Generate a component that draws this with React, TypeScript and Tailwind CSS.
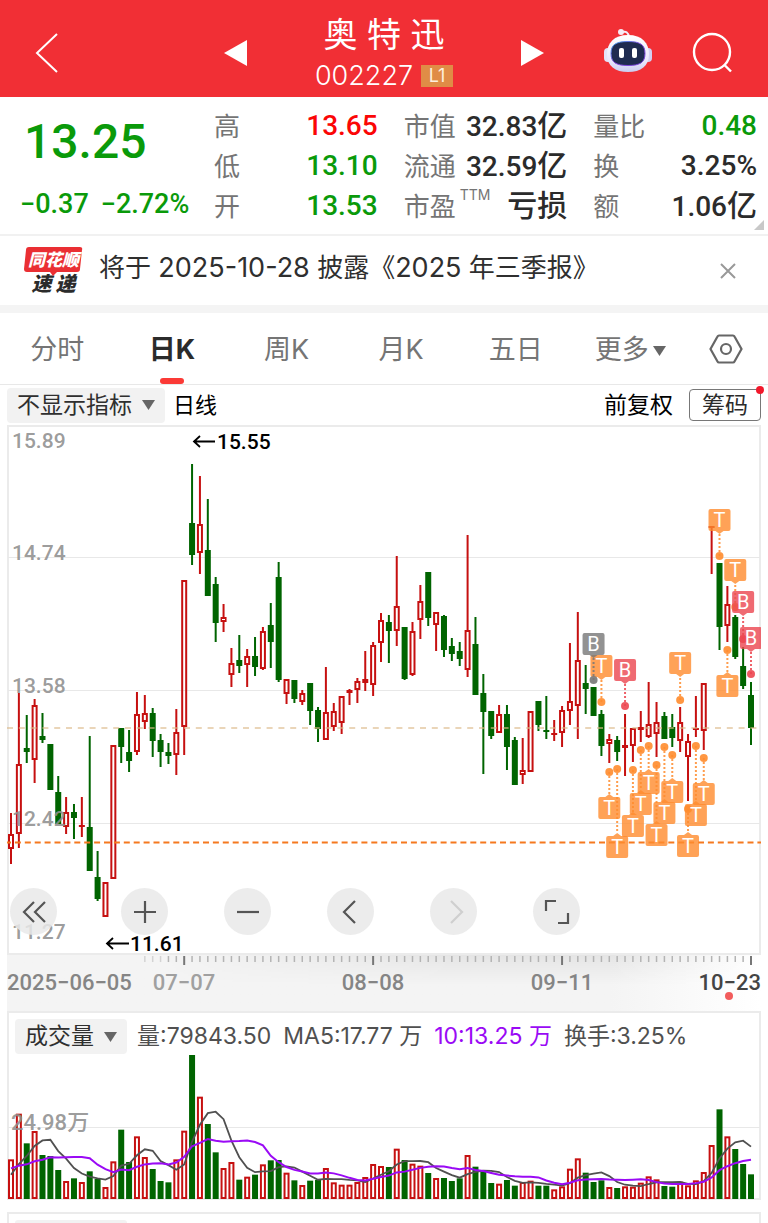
import type { ReactNode } from 'react';

type Candle = ['r' | 'g', number, number, number, number];

// color, high, body top, body bottom, low
const candles: Candle[] = [
  ['r', 813, 834, 849, 864], ['r', 693, 764, 834, 848], ['g', 715, 748, 752, 763], ['r', 699, 705, 760, 783],
  ['g', 713, 736, 740, 743], ['g', 744, 744, 790, 790], ['g', 776, 792, 824, 824], ['r', 797, 812, 827, 834],
  ['g', 804, 812, 818, 839], ['r', 797, 825, 827, 837], ['g', 736, 827, 871, 871], ['g', 851, 877, 899, 901],
  ['r', 882, 882, 917, 917], ['r', 745, 745, 879, 879], ['g', 728, 728, 747, 763], ['g', 730, 752, 761, 772],
  ['r', 692, 714, 752, 755], ['r', 695, 713, 722, 729], ['g', 708, 713, 741, 757], ['g', 734, 740, 752, 767],
  ['g', 743, 752, 756, 764], ['r', 709, 732, 755, 775], ['r', 580, 580, 727, 755], ['g', 464, 523, 555, 565],
  ['r', 476, 524, 553, 574], ['g', 499, 550, 596, 596], ['g', 577, 584, 623, 642], ['r', 604, 617, 622, 632],
  ['r', 648, 663, 675, 687], ['g', 635, 660, 666, 673], ['r', 649, 656, 665, 687], ['g', 637, 656, 667, 676],
  ['r', 627, 631, 669, 670], ['g', 603, 625, 642, 668], ['g', 562, 577, 680, 682], ['r', 679, 679, 694, 704],
  ['g', 680, 680, 699, 703], ['r', 690, 693, 702, 705], ['g', 683, 683, 711, 725], ['g', 707, 710, 729, 742],
  ['r', 667, 712, 740, 740], ['r', 703, 711, 727, 731], ['r', 696, 696, 723, 734], ['r', 689, 690, 693, 705],
  ['r', 678, 681, 690, 703], ['r', 651, 679, 683, 691], ['r', 642, 645, 685, 696], ['r', 613, 620, 643, 662],
  ['g', 615, 622, 631, 663], ['r', 556, 606, 631, 646], ['g', 627, 627, 679, 680], ['r', 622, 631, 675, 676],
  ['r', 585, 601, 620, 639], ['g', 572, 572, 618, 626], ['r', 612, 612, 625, 651], ['g', 615, 616, 650, 657],
  ['g', 638, 646, 654, 661], ['g', 642, 651, 659, 666], ['r', 535, 630, 670, 677], ['g', 617, 644, 695, 695],
  ['g', 674, 693, 712, 774], ['g', 711, 711, 736, 739], ['r', 705, 714, 733, 733], ['g', 705, 714, 747, 770],
  ['g', 737, 740, 785, 785], ['r', 738, 770, 775, 784], ['r', 711, 711, 772, 772], ['g', 701, 701, 725, 731],
  ['g', 696, 730, 731, 739], ['r', 720, 733, 735, 741], ['r', 706, 710, 733, 747], ['r', 643, 701, 711, 725],
  ['r', 612, 660, 706, 739], ['g', 665, 683, 689, 714], ['g', 687, 687, 716, 716], ['g', 710, 714, 746, 756],
  ['r', 734, 739, 744, 763], ['g', 736, 740, 752, 761], ['r', 714, 745, 748, 776], ['r', 728, 728, 746, 762],
  ['r', 711, 727, 730, 742], ['r', 682, 724, 737, 738], ['r', 702, 722, 734, 757], ['g', 712, 716, 739, 739],
  ['g', 714, 727, 738, 747], ['r', 707, 722, 741, 752], ['r', 734, 741, 757, 801], ['r', 696, 728, 730, 737],
  ['r', 683, 683, 731, 750], ['r', 526, 526, 528, 574], ['g', 563, 563, 627, 650], ['r', 586, 604, 626, 642],
  ['g', 615, 617, 657, 659], ['g', 647, 666, 686, 689], ['g', 682, 695, 728, 745],
];

// days before the first visible candle, only used by the averages
const earlierVolumes = [176, 127, 114, 82, 56, 96, 47, 54, 49];

const volumes = [
  119, 256, 167, 204, 132, 129, 87, 54, 62, 51, 83, 60, 36, 113, 208, 111, 188, 126, 90, 54,
  50, 119, 205, 432, 307, 225, 140, 93, 111, 58, 67, 73, 104, 116, 117, 79, 56, 42, 55, 57,
  93, 50, 43, 43, 51, 66, 105, 99, 96, 151, 117, 106, 100, 78, 63, 63, 54, 62, 132, 97,
  82, 48, 46, 57, 40, 51, 55, 40, 40, 29, 38, 91, 122, 79, 51, 56, 36, 33, 38, 37,
  49, 68, 59, 39, 37, 52, 41, 56, 81, 162, 269, 188, 150, 105, 74,
];

type Marker = { i: number; box: number; dot: number; text: string; color: string };

const ORANGE = '#ff8c2e';
const RED = '#ec4650';
const GRAY = '#777777';

const markers: Marker[] = [
  { i: 90, box: 520, dot: 556, text: 'T', color: ORANGE },
  { i: 92, box: 570, dot: 607, text: 'T', color: ORANGE },
  { i: 93, box: 602, dot: 639, text: 'B', color: RED },
  { i: 94, box: 638, dot: 674, text: 'B', color: RED },
  { i: 91, box: 686, dot: 650, text: 'T', color: ORANGE },
  { i: 75, box: 666, dot: 702, text: 'T', color: ORANGE },
  { i: 74, box: 644, dot: 680, text: 'B', color: GRAY },
  { i: 78, box: 670, dot: 706, text: 'B', color: RED },
  { i: 85, box: 663, dot: 700, text: 'T', color: ORANGE },
  { i: 76, box: 808, dot: 772, text: 'T', color: ORANGE },
  { i: 77, box: 847, dot: 769, text: 'T', color: ORANGE },
  { i: 79, box: 826, dot: 770, text: 'T', color: ORANGE },
  { i: 80, box: 804, dot: 750, text: 'T', color: ORANGE },
  { i: 81, box: 783, dot: 746, text: 'T', color: ORANGE },
  { i: 82, box: 835, dot: 765, text: 'T', color: ORANGE },
  { i: 83, box: 813, dot: 747, text: 'T', color: ORANGE },
  { i: 84, box: 792, dot: 755, text: 'T', color: ORANGE },
  { i: 86, box: 846, dot: 809, text: 'T', color: ORANGE },
  { i: 87, box: 815, dot: 746, text: 'T', color: ORANGE },
  { i: 88, box: 794, dot: 758, text: 'T', color: ORANGE },
];

const xAt = (i: number) => 11 + (i * 740) / 94;

const colorOf = (kind: 'r' | 'g') => (kind === 'r' ? '#c61010' : '#006400');

function averageLine(days: number) {
  const all = [...earlierVolumes, ...volumes];
  return volumes
    .map((_, i) => {
      const end = i + earlierVolumes.length + 1;
      const sum = all.slice(end - days, end).reduce((a, b) => a + b, 0);
      return `${xAt(i)},${1199 - sum / days / 3}`;
    })
    .join(' ');
}

function Robot() {
  return (
    <svg width="48" height="46" viewBox="0 0 48 46">
      <defs>
        <linearGradient id="head" x1="0" y1="0" x2="0" y2="1">
          <stop offset="0" stopColor="#ffffff" />
          <stop offset="0.7" stopColor="#e9e6fb" />
          <stop offset="1" stopColor="#c9cdf0" />
        </linearGradient>
        <linearGradient id="rim" x1="0" y1="0" x2="1" y2="1">
          <stop offset="0" stopColor="#3aa6e8" />
          <stop offset="0.5" stopColor="#8a4be0" />
          <stop offset="1" stopColor="#6d3fd6" />
        </linearGradient>
      </defs>
      <path d="M18 4c4-1 6 0 7 5" fill="none" stroke="#f3eefc" strokeWidth="2" />
      <circle cx="17" cy="4" r="3" fill="#f6eaf4" />
      <rect x="0" y="20" width="8" height="14" rx="4" fill="#e4e2f8" />
      <rect x="40" y="20" width="8" height="14" rx="4" fill="#d2d0f2" />
      <path d="M24 7C10 7 3 15 3 26c0 12 8 18 21 18s21-6 21-18C45 15 38 7 24 7z" fill="url(#head)" />
      <path d="M24 13.500c-12 0-17 3-17 12s5 12 17 12 17-3 17-12-5-12-17-12z" fill="#1f2b50" stroke="url(#rim)" strokeWidth="1" />
      <rect x="15" y="20" width="5" height="10" rx="2" fill="#fff" />
      <rect x="28" y="20" width="5" height="10" rx="2" fill="#fff" />
    </svg>
  );
}

function Header() {
  return (
    <header className="grid h-[97px] grid-cols-[1fr_auto_1fr] items-center bg-[#f12f35] text-white">
      <div className="pt-2 pl-[35px]">
        <button type="button" aria-label="返回" className="block">
          <svg width="24" height="42" viewBox="0 0 24 42" fill="none" stroke="currentColor" strokeWidth="2">
            <path d="M22 2 2 21l20 19" />
          </svg>
        </button>
      </div>
      <div className="flex items-center">
        <button type="button" aria-label="上一只" className="pt-2">
          <svg width="23" height="26" viewBox="0 0 23 26" fill="currentColor">
            <path d="M23 0v26L0 13z" />
          </svg>
        </button>
        <div className="flex w-[274px] flex-col items-center pt-2">
          <h1 className="text-[34px] leading-[46px]">奥 特 迅</h1>
          <div className="flex items-center gap-2">
            <span className="text-[27px] leading-[36px] font-light">002227</span>
            <span className="flex h-[22px] w-8 items-center justify-center bg-[#e08c46] text-[18px] text-[#fdeedd]">L1</span>
          </div>
        </div>
        <button type="button" aria-label="下一只" className="pt-2">
          <svg width="23" height="26" viewBox="0 0 23 26" fill="currentColor">
            <path d="M0 0v26l23-13z" />
          </svg>
        </button>
      </div>
      <div className="flex items-center justify-end gap-10 pt-1 pr-[35px]">
        <button type="button" aria-label="助手">
          <Robot />
        </button>
        <button type="button" aria-label="搜索" className="pt-1">
          <svg width="41" height="41" viewBox="0 0 41 41" fill="none" stroke="currentColor" strokeWidth="2.400">
            <circle cx="20" cy="20" r="18" />
            <path d="M32 32.500l7 7" />
          </svg>
        </button>
      </div>
    </header>
  );
}

function Stat({ label, sup, value, unit, color }: { label: string; sup?: string; value?: string; unit?: string; color: string }) {
  return (
    <div className="flex h-10 items-center justify-between">
      <dt className="text-[26px] whitespace-nowrap text-[#757575]">
        {label}
        {sup && <sup className="-top-4 ml-1 text-[14px]">{sup}</sup>}
      </dt>
      <dd className={`font-['Roboto','Noto_Sans_CJK_SC',sans-serif] text-[28px] leading-10 font-medium whitespace-nowrap ${color}`}>
        {value}
        {unit && <span className="text-[30px]">{unit}</span>}
      </dd>
    </div>
  );
}

function Quote() {
  return (
    <section className="relative flex border-b-2 border-[#f1f1f1] pt-[9px] pr-[11px] pb-2 pl-6">
      <div className="w-[190px] shrink-0 font-['Roboto',sans-serif] font-medium whitespace-nowrap text-[#0a9a0a]">
        <div className="pt-[10px] text-[48px] leading-[52px]">13.25</div>
        <div className="-ml-1 flex gap-3 pt-4 text-[27px] leading-[40px]">
          <span>−0.37</span>
          <span>−2.72%</span>
        </div>
      </div>
      <dl className="grid flex-1 grid-cols-3 gap-x-[26px]">
        <div>
          <Stat label="高" value="13.65" color="text-[#fb0606]" />
          <Stat label="低" value="13.10" color="text-[#0a9a0a]" />
          <Stat label="开" value="13.53" color="text-[#0a9a0a]" />
        </div>
        <div>
          <Stat label="市值" value="32.83" unit="亿" color="text-[#2b2b2b]" />
          <Stat label="流通" value="32.59" unit="亿" color="text-[#2b2b2b]" />
          <Stat label="市盈" sup="TTM" unit="亏损" color="text-[#2b2b2b]" />
        </div>
        <div>
          <Stat label="量比" value="0.48" color="text-[#0a9a0a]" />
          <Stat label="换" value="3.25%" color="text-[#2b2b2b]" />
          <Stat label="额" value="1.06" unit="亿" color="text-[#2b2b2b]" />
        </div>
      </dl>
      <svg className="absolute right-1 bottom-1" width="10" height="10" viewBox="0 0 10 10">
        <path d="M10 0v10H0z" fill="#c8c8c8" />
      </svg>
    </section>
  );
}

function Notice() {
  return (
    <section className="flex h-[77px] items-center border-b-8 border-[#f4f4f4] pr-8 pl-6">
      <div className="w-[59px] shrink-0 text-center font-black italic">
        <div className="relative">
          <svg className="absolute inset-0" width="59" height="30" viewBox="0 0 59 30" fill="#ea2f33">
            <path d="M5 0h51q3 0 2 3l-2 19q0 3-3 3H33l-4 4-3-4H3q-3 0-3-3L2 3q0-3 3-3z" />
          </svg>
          <div className="relative text-[17px] leading-[26px] text-white">同花顺</div>
        </div>
        <div className="text-[20px] leading-[22px] text-[#2b2b2b]">速 递</div>
      </div>
      <p className="flex-1 pb-1 pl-4 text-[26px] text-[#2f2f2f]">
        将于 <span className="text-[27px]">2025-10-28</span> 披露《<span className="text-[27px]">2025</span> 年三季报》
      </p>
      <button type="button" aria-label="关闭" className="text-[#999]">
        <svg width="16" height="16" viewBox="0 0 16 16" fill="none" stroke="currentColor" strokeWidth="2">
          <path d="M1 1l14 14M15 1 1 15" />
        </svg>
      </button>
    </section>
  );
}

function Caret() {
  return (
    <svg width="13" height="10" viewBox="0 0 13 10" fill="#666">
      <path d="M0 0h13L6.500 10z" />
    </svg>
  );
}

const tabs = ['分时', '日K', '周K', '月K', '五日'];

function Tabs() {
  return (
    <nav className="grid h-[72px] grid-cols-[repeat(6,15%)_1fr] border-b border-[#e8e8e8] pr-1 text-[27px] text-[#757575]">
      {tabs.map((tab) =>
        tab === '日K' ? (
          <button key={tab} type="button" className="relative pt-1 font-bold text-[#2b2b2b]">
            {tab}
            <span className="absolute bottom-0 left-1/2 h-[6px] w-6 -translate-x-1/2 rounded-full bg-[#fb3a36]" />
          </button>
        ) : (
          <button key={tab} type="button" className="pt-1">
            {tab}
          </button>
        ),
      )}
      <button type="button" className="flex items-center justify-center gap-1 pt-1">
        更多
        <Caret />
      </button>
      <button type="button" aria-label="设置" className="flex items-center justify-center">
        <svg width="34" height="30" viewBox="0 0 34 30" fill="none" stroke="#666" strokeWidth="2.200">
          <path d="M10 1.500h14q1 0 1.500 1L32.500 15l-7 12.500q-.5 1-1.500 1H10q-1 0-1.500-1L1.500 15l7-12.500q.5-1 1.500-1z" />
          <circle cx="17" cy="15" r="5" />
        </svg>
      </button>
    </nav>
  );
}

function Toolbar() {
  return (
    <div className="flex h-10 items-center px-[7px] text-[23px]">
      <button type="button" className="flex h-[35px] items-center gap-[10px] rounded bg-[#f2f2f2] px-[10px] text-[#2f2f2f]">
        不显示指标
        <Caret />
      </button>
      <span className="ml-2 text-[22px] text-black">日线</span>
      <span className="ml-auto text-black">前复权</span>
      <button type="button" className="relative ml-4 flex h-8 items-center rounded border border-[#777] px-3 text-[#2b2b2b]">
        筹码
        <span className="absolute -top-1 -right-1 size-2 rounded-full bg-[#f2182b]" />
      </button>
    </div>
  );
}

function CandleShape({ candle, i }: { candle: Candle; i: number }) {
  const [kind, high, top, bottom, low] = candle;
  const x = xAt(i);
  const color = colorOf(kind);
  const height = Math.max(bottom - top, 2);
  return (
    <g stroke={color} strokeWidth="2">
      <path d={`M${x} ${high}V${top}M${x} ${bottom}V${low}`} />
      {kind === 'r' && height > 3 ? (
        <rect x={x - 2} y={top + 1} width="4" height={height - 2} fill="none" />
      ) : (
        <rect x={x - 3} y={top} width="6" height={height} fill={color} stroke="none" />
      )}
    </g>
  );
}

function MarkerShape({ i, box, dot, text, color }: Marker) {
  const x = xAt(i);
  const dir = dot > box ? 1 : -1;
  const edge = box + dir * 11;
  return (
    <g>
      <g opacity="0.800" fill={color}>
        <rect x={x - 11} y={box - 11} width="22" height="22" rx="2" />
        <path d={`M${x - 4} ${edge}h8L${x} ${edge + dir * 3}z`} />
      </g>
      <path d={`M${x} ${dot}V${edge + dir * 3}`} stroke={color} strokeWidth="2" strokeDasharray="2 2" opacity="0.850" />
      <circle cx={x} cy={dot} r="4" fill={color} opacity="0.900" />
      <text x={x} y={box + 7} textAnchor="middle" fontSize="20" fill="#fff">
        {text}
      </text>
    </g>
  );
}

const priceLabels: [string, number][] = [
  ['15.89', 448],
  ['14.74', 560],
  ['13.58', 693],
  ['12.42', 826],
  ['11.27', 939],
];

function RoundButton({ label, className = 'text-[#555]', children }: { label: string; className?: string; children: ReactNode }) {
  return (
    <button
      type="button"
      aria-label={label}
      className={`flex size-[47px] items-center justify-center rounded-full bg-[#e9e9e9]/85 ${className}`}
    >
      <svg width="26" height="26" viewBox="0 0 26 26" fill="none" stroke="currentColor" strokeWidth="2.200">
        {children}
      </svg>
    </button>
  );
}

function KLineChart() {
  return (
    <div className="relative mx-[7px] ring-2 ring-[#ebebeb] ring-inset">
      <svg viewBox="7 425 754 530" className="block h-auto w-full font-['Roboto',sans-serif]">
        <path d="M8 557.500H760M8 690.500H760M8 823.500H760" stroke="#e8e8e8" strokeWidth="1" />
        {candles.map((candle, i) => (
          <CandleShape key={i} candle={candle} i={i} />
        ))}
        <path d="M7 728H760" stroke="#dcb98a" strokeOpacity="0.800" strokeWidth="1.500" strokeDasharray="6 5.800" />
        <path d="M7 842.500H761" stroke="#f5791f" strokeWidth="2" strokeDasharray="6 3.900" strokeDashoffset="2" />
        {markers.map((marker) => (
          <MarkerShape key={marker.i} {...marker} />
        ))}
        <g fontSize="21" fontWeight="500" fill="#8f8f8f" fillOpacity="0.900">
          {priceLabels.map(([label, y]) => (
            <text key={label} x="12" y={y}>
              {label}
            </text>
          ))}
        </g>
        <g fontSize="21" fontWeight="500">
          <text x="217" y="449">15.55</text>
          <text x="130" y="951">11.61</text>
        </g>
        <path d="M215 441.500H194M200 436l-6 5.500 6 5.500M129 943.500H107M113 938l-6 5.500 6 5.500" fill="none" stroke="#000" strokeWidth="1.800" />
      </svg>
      <div className="absolute bottom-5 left-[3px] flex gap-14">
        <RoundButton label="最早" className="mr-2 text-[#555]">
          <path d="M13 3 3 13l10 10M24 3 14 13l10 10" />
        </RoundButton>
        <RoundButton label="放大">
          <path d="M2 13h22M13 2v22" />
        </RoundButton>
        <RoundButton label="缩小">
          <path d="M2 13h22" />
        </RoundButton>
        <RoundButton label="向左">
          <path d="M17 2 6 13l11 11" />
        </RoundButton>
        <RoundButton label="向右" className="text-[#cfcfcf]">
          <path d="M10 2l11 11-11 11" />
        </RoundButton>
        <RoundButton label="全屏">
          <path d="M2 12V2h10M24 14v10H14" />
        </RoundButton>
      </div>
    </div>
  );
}

function DateAxis() {
  const ticks = candles.map((_, i) => i).filter((i) => i >= 17);
  return (
    <div className="mx-[7px] bg-linear-to-r from-[#f4f4f4] from-80% to-white">
      <svg viewBox="7 955 754 56" className="block h-auto w-full font-['Roboto',sans-serif]">
        <defs>
          <linearGradient id="shade" x1="0" y1="0" x2="0" y2="1">
            <stop offset="0" stopColor="#000" stopOpacity="0.060" />
            <stop offset="1" stopColor="#000" stopOpacity="0" />
          </linearGradient>
          <linearGradient id="fade">
            <stop offset="0.200" stopColor="#000" />
            <stop offset="0.600" stopColor="#fff" />
            <stop offset="0.800" stopColor="#fff" />
            <stop offset="1" stopColor="#000" />
          </linearGradient>
          <mask id="middle">
            <rect x="7" y="955" width="754" height="56" fill="url(#fade)" />
          </mask>
        </defs>
        <rect x="7" y="955" width="754" height="30" fill="url(#shade)" mask="url(#middle)" />
        {ticks.map((i) => {
          const major = (i - 22) % 24 === 0;
          return (
            <path
              key={i}
              d={`M${xAt(i)} 956v${major ? 9 : 6}`}
              stroke={major ? '#777' : '#b4b4b4'}
              strokeWidth={major ? 2 : 1.5}
              opacity={i < 20 ? 0.5 : 1}
            />
          );
        })}
        <g fontSize="22" fontWeight="500" fill="#858585">
          <text x="7" y="990">2025−06−05</text>
          <text x="184" y="990" textAnchor="middle" fill="#a0a0a0">07−07</text>
          <text x="373" y="990" textAnchor="middle">08−08</text>
          <text x="562" y="990" textAnchor="middle">09−11</text>
          <text x="761" y="990" textAnchor="end" fill="#444">10−23</text>
        </g>
        <circle cx="729" cy="996" r="4" fill="#f25c5c" />
      </svg>
    </div>
  );
}

function VolumePanel() {
  return (
    <section className="mx-[7px] ring-2 ring-[#ebebeb] ring-inset">
      <div className="flex h-[43px] items-end pl-2 text-[23px] whitespace-nowrap text-[#505050]">
        <button type="button" className="flex h-[35px] items-center gap-[10px] rounded bg-[#f2f2f2] px-[10px] text-[#2f2f2f]">
          成交量
          <Caret />
        </button>
        <div className="flex h-[35px] items-center gap-3 pl-[10px]">
          <span>量:79843.50</span>
          <span>MA5:17.77 万</span>
          <span className="text-[#9a0af5]">10:13.25 万</span>
          <span>换手:3.25%</span>
        </div>
      </div>
      <svg viewBox="7 1054 754 146" className="block h-auto w-full font-['Roboto','Noto_Sans_CJK_SC',sans-serif]">
        <path d="M8 1127.500H760" stroke="#e8e8e8" />
        {volumes.map((volume, i) => {
          const kind = candles[i][0];
          const h = volume / 3;
          return kind === 'r' ? (
            <rect key={i} x={xAt(i) - 2} y={1200 - h} width="4" height={h - 2} fill="none" stroke={colorOf(kind)} strokeWidth="2" />
          ) : (
            <rect key={i} x={xAt(i) - 3} y={1199 - h} width="6" height={h} fill={colorOf(kind)} />
          );
        })}
        <polyline points={averageLine(5)} fill="none" stroke="#505050" strokeWidth="1.800" />
        <polyline points={averageLine(10)} fill="none" stroke="#9a0af5" strokeWidth="2" />
        <text x="11" y="1130" fontSize="22" fontWeight="500" fill="#8f8f8f" fillOpacity="0.900">
          24.98万
        </text>
      </svg>
    </section>
  );
}

export default function App() {
  return (
    <main className="min-h-screen overflow-hidden bg-white font-['Inter','Noto_Sans_CJK_SC',sans-serif]">
      <Header />
      <Quote />
      <Notice />
      <Tabs />
      <Toolbar />
      <KLineChart />
      <DateAxis />
      <VolumePanel />
      <section className="mx-[7px] mt-3 border-2 border-b-0 border-[#ebebeb] pt-[6px] pl-[6px]">
        <div className="h-[3px] w-[112px] rounded-t bg-[#f2f2f2]" />
      </section>
    </main>
  );
}
